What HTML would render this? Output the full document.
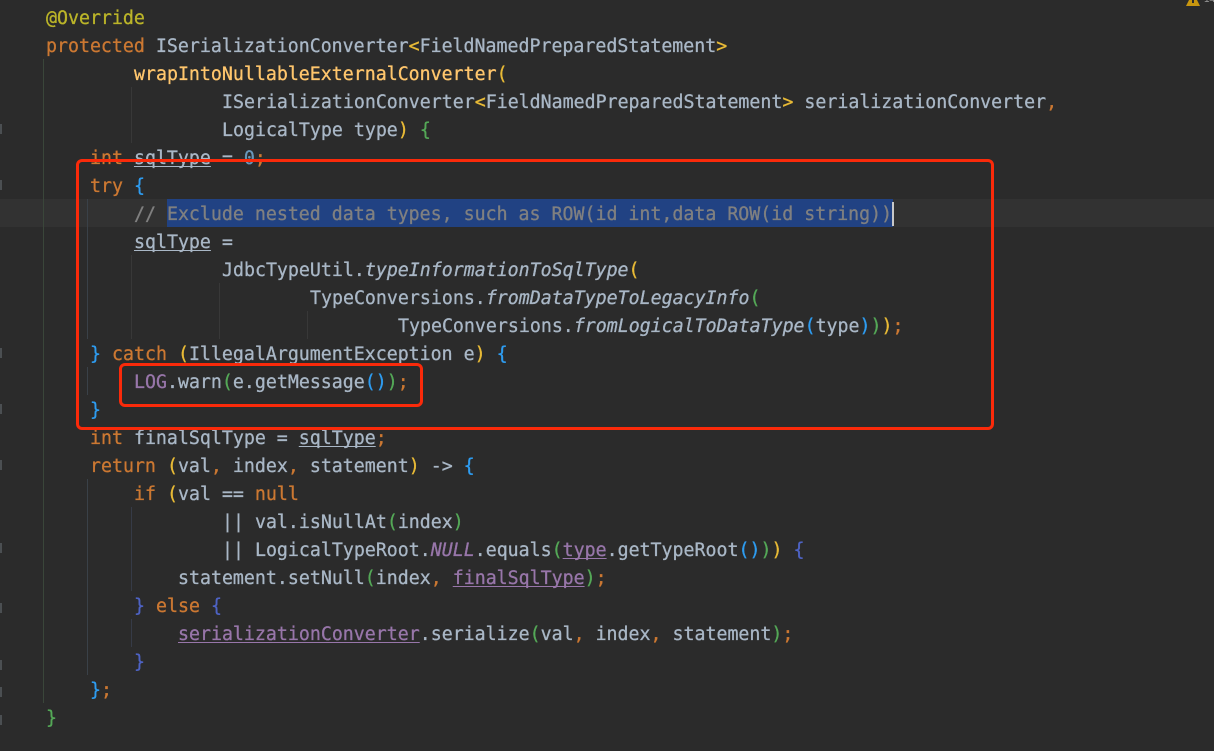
<!DOCTYPE html>
<html><head><meta charset="utf-8">
<style>
html,body{margin:0;padding:0;background:#2b2b2b;}
#p{position:relative;width:1214px;height:751px;overflow:hidden;background:#2b2b2b;}
.l{position:absolute;left:0;height:28px;margin-top:1px;line-height:28px;white-space:pre;font-family:"DejaVu Sans Mono","Liberation Mono",monospace;font-size:18.25px;color:#a9b7c6;-webkit-text-stroke:.3px currentColor;}
.k{color:#cc7832}.a{color:#bbb529}.f{color:#ffc66d}.c{color:#808080}
.y{color:#e8ba36}.g{color:#54a857}.b{color:#2e9cf0}.n{color:#4e63c4}.o{color:#cc7832}
.v{color:#9876aa}.u{text-decoration:underline;text-decoration-thickness:1px;text-underline-offset:2px;text-decoration-skip-ink:none}.num{color:#6897bb}.i{font-style:italic}
.ig{position:absolute;width:1px;background:#3a4148}
.gm{position:absolute;left:0;width:2px;height:10px;background:#4b4f52}
.r{position:absolute;box-sizing:border-box;border:3px solid #fa2a0a;border-radius:6px}
</style></head><body><div id="p">
<div style="position:absolute;left:0;top:199px;width:1214px;height:28px;background:#323232"></div>
<div style="position:absolute;left:167px;top:199px;width:726px;height:28px;background:#214283"></div>
<div style="position:absolute;left:892px;top:202px;width:2px;height:24px;background:#c8c8c8"></div>

<div class="ig" style="left:43px;top:59px;height:644px;background:#3a463a"></div>
<div class="ig" style="left:87px;top:199px;height:140px"></div>
<div class="ig" style="left:87px;top:367px;height:28px"></div>
<div class="ig" style="left:87px;top:479px;height:196px"></div>
<div class="ig" style="left:131px;top:87px;height:56px;background:#383838"></div>
<div class="ig" style="left:131px;top:255px;height:84px;background:#383838"></div>
<div class="ig" style="left:131px;top:507px;height:84px;background:#363b47"></div>
<div class="ig" style="left:131px;top:619px;height:28px;background:#363b47"></div>
<div class="ig" style="left:219px;top:283px;height:56px;background:#383838"></div>
<div class="ig" style="left:307px;top:311px;height:28px;background:#383838"></div>

<div class="gm" style="top:124px"></div><div class="gm" style="top:180px"></div>
<div class="gm" style="top:348px"></div><div class="gm" style="top:404px"></div>
<div class="gm" style="top:460px"></div><div class="gm" style="top:543px"></div>
<div class="gm" style="top:603px"></div><div class="gm" style="top:660px"></div>
<div class="gm" style="top:687px"></div><div class="gm" style="top:715px"></div>

<div class="l" style="top:4px;left:46px"><span class="a">@Override</span></div>
<div class="l" style="top:32px;left:46px"><span class="k">protected</span> ISerializationConverter<span class="y">&lt;</span>FieldNamedPreparedStatement<span class="y">&gt;</span></div>
<div class="l" style="top:60px;left:134px"><span class="f">wrapIntoNullableExternalConverter</span><span class="y">(</span></div>
<div class="l" style="top:88px;left:222px">ISerializationConverter<span class="y">&lt;</span>FieldNamedPreparedStatement<span class="y">&gt;</span> serializationConverter<span class="o">,</span></div>
<div class="l" style="top:116px;left:222px">LogicalType type<span class="y">)</span> <span class="g">{</span></div>
<div class="l" style="top:144px;left:90px"><span class="k">int</span> <span class="u">sqlType</span> = <span class="num">0</span><span class="o">;</span></div>
<div class="l" style="top:172px;left:90px"><span class="k">try</span> <span class="b">{</span></div>
<div class="l" style="top:200px;left:134px"><span class="c">// Exclude nested data types, such as ROW(id int,data ROW(id string))</span></div>
<div class="l" style="top:228px;left:134px"><span class="u">sqlType</span> =</div>
<div class="l" style="top:256px;left:222px">JdbcTypeUtil.<span class="i">typeInformationToSqlType</span><span class="y">(</span></div>
<div class="l" style="top:284px;left:310px">TypeConversions.<span class="i">fromDataTypeToLegacyInfo</span><span class="g">(</span></div>
<div class="l" style="top:312px;left:398px">TypeConversions.<span class="i">fromLogicalToDataType</span><span class="b">(</span>type<span class="b">)</span><span class="g">)</span><span class="y">)</span><span class="o">;</span></div>
<div class="l" style="top:340px;left:90px"><span class="b">}</span> <span class="k">catch</span> <span class="y">(</span>IllegalArgumentException e<span class="y">)</span> <span class="b">{</span></div>
<div class="l" style="top:368px;left:134px"><span class="v">LOG</span>.warn<span class="g">(</span>e.getMessage<span class="b">()</span><span class="g">)</span><span class="o">;</span></div>
<div class="l" style="top:396px;left:90px"><span class="b">}</span></div>
<div class="l" style="top:424px;left:90px"><span class="k">int</span> finalSqlType = <span class="u">sqlType</span><span class="o">;</span></div>
<div class="l" style="top:452px;left:90px"><span class="k">return</span> <span class="y">(</span>val<span class="o">,</span> index<span class="o">,</span> statement<span class="y">)</span> -&gt; <span class="b">{</span></div>
<div class="l" style="top:480px;left:134px"><span class="k">if</span> <span class="y">(</span>val == <span class="k">null</span></div>
<div class="l" style="top:508px;left:222px">|| val.isNullAt<span class="g">(</span>index<span class="g">)</span></div>
<div class="l" style="top:536px;left:222px">|| LogicalTypeRoot.<span class="v i">NULL</span>.equals<span class="g">(</span><span class="v u">type</span>.getTypeRoot<span class="b">()</span><span class="g">)</span><span class="y">)</span> <span class="n">{</span></div>
<div class="l" style="top:564px;left:178px">statement.setNull<span class="g">(</span>index<span class="o">,</span> <span class="v u">finalSqlType</span><span class="g">)</span><span class="o">;</span></div>
<div class="l" style="top:592px;left:134px"><span class="n">}</span> <span class="k">else</span> <span class="n">{</span></div>
<div class="l" style="top:620px;left:178px"><span class="v u">serializationConverter</span>.serialize<span class="g">(</span>val<span class="o">,</span> index<span class="o">,</span> statement<span class="g">)</span><span class="o">;</span></div>
<div class="l" style="top:648px;left:134px"><span class="n">}</span></div>
<div class="l" style="top:676px;left:90px"><span class="b">}</span><span class="o">;</span></div>
<div class="l" style="top:704px;left:46px"><span class="g">}</span></div>

<div class="r" style="left:76px;top:159px;width:918px;height:271px"></div>
<div class="r" style="left:119px;top:363px;width:304px;height:44px"></div>

<svg style="position:absolute;left:1186px;top:0" width="14" height="6"><path d="M3 0H11L14 6H0Z" fill="#c8960f"/><rect x="6" y="0" width="2" height="3" fill="#2b2b2b"/></svg>
<div style="position:absolute;left:1204px;top:-5px;font:10px/10px 'Liberation Sans',sans-serif;color:#9a9a9a">14</div>
</div></body></html>
